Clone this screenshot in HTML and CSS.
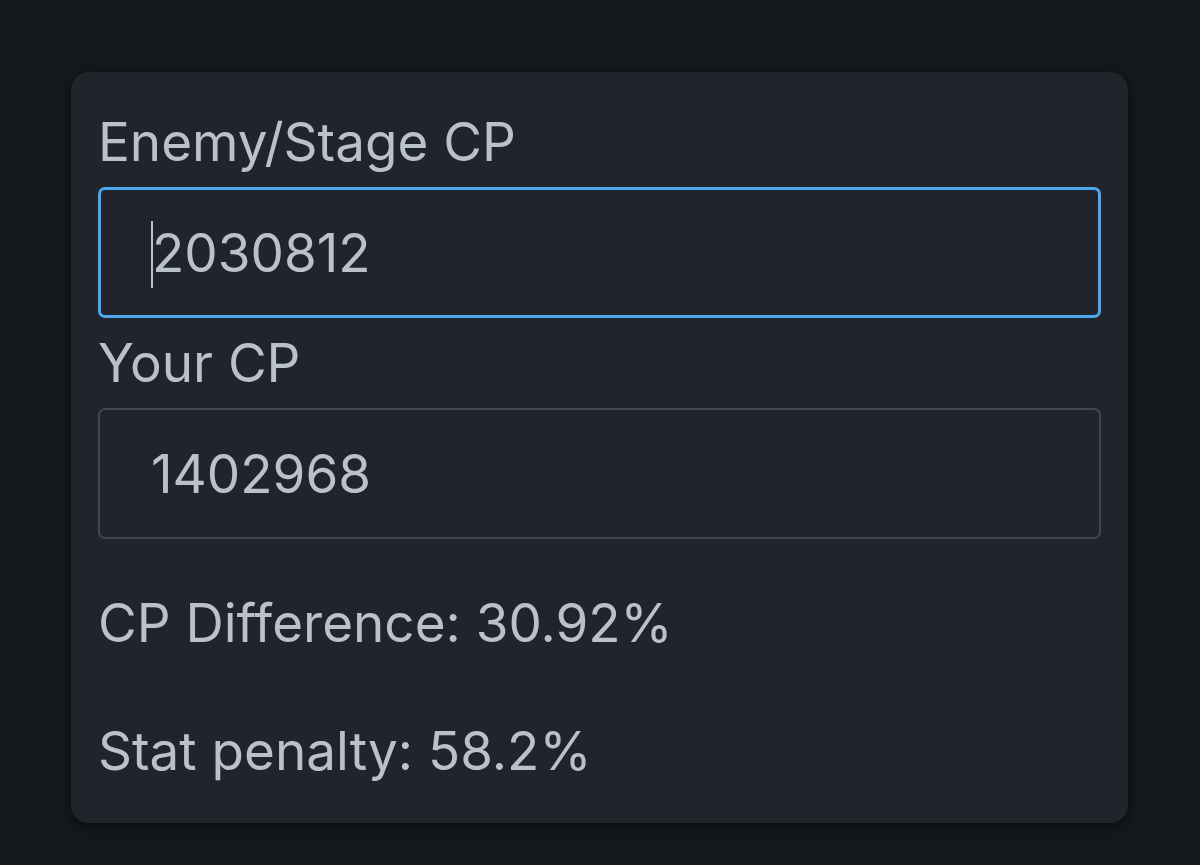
FILE: index.html
```html
<!DOCTYPE html>
<html>
<head>
<meta charset="utf-8">
<link rel="stylesheet" href="styles.css">
</head>
<body>
<div class="card">
  <div class="label">Enemy/Stage CP</div>
  <div class="field focused"><span class="caret"></span>2030812</div>
  <div class="label">Your CP</div>
  <div class="field">1402968</div>
  <p class="result">CP Difference: 30.92%</p>
  <p class="result">Stat penalty: 58.2%</p>
</div>
</body>
</html>
```
FILE: styles.css
```css
html, body {
  margin: 0;
  padding: 0;
  background: #15181c;
  height: 100%;
}
body {
  padding: 72px 72px 0 71px;
  box-sizing: border-box;
  font-family: Inter, "Noto Sans", sans-serif;
  color: #b9c1ca;
}
.card {
  background: #21242a;
  border-radius: 18px;
  box-shadow: 0 4px 14px rgba(0, 0, 0, 0.45);
  padding: 25px 27px 26px 27px;
  height: 751px;
  box-sizing: border-box;
  display: flex;
  flex-direction: column;
}
.label {
  font-size: 53px;
  line-height: 90px;
  height: 90px;
}
.field {
  height: 131px;
  box-sizing: border-box;
  border: 2px solid #41464d;
  border-radius: 7px;
  padding-left: 51px;
  font-size: 53px;
  display: flex;
  align-items: center;
}
.field.focused {
  border: 3px solid #4ba7ef;
  padding-left: 50px;
}
.caret {
  display: inline-block;
  width: 2px;
  height: 67px;
  background: #b9c1ca;
  margin-right: -1px;
  position: relative;
  top: 2px;
}
.result {
  margin: 39px 0 0 0;
  font-size: 53px;
  line-height: 90px;
}
.result + .result {
  margin-top: 38px;
}
```
